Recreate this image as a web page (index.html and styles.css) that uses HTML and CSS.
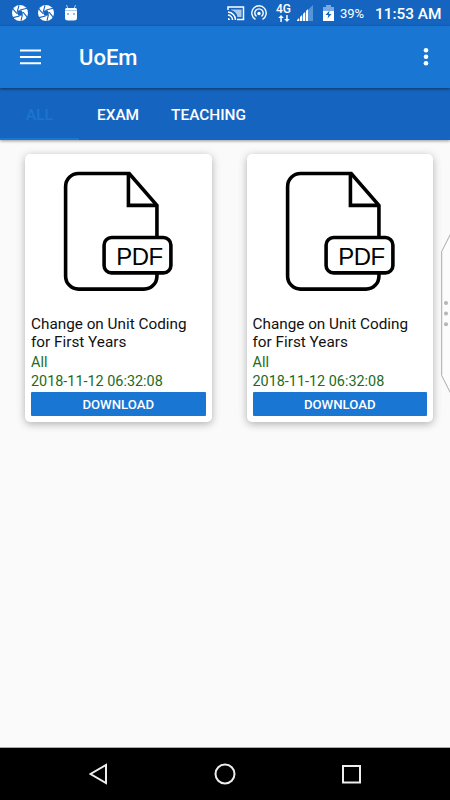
FILE: index.html
```html
<!DOCTYPE html>
<html lang="en">
<head>
<meta charset="utf-8">
<title>UoEm</title>
<link rel="stylesheet" href="styles.css">
</head>
<body>
<svg class="defs" width="0" height="0">
  <symbol id="shutter" viewBox="0 0 16 16">
    <circle cx="8" cy="8" r="8" fill="#fff"/>
    <path d="M5.2 7 7 .3M8.2 5 15 3.2M11 7.2l4.2 5M10.5 9.3 9 15.7M7.6 11 1 12.6M5 8.6.8 3.8" stroke="#1565c0" stroke-width="1.1" fill="none"/>
    <path d="m6.6 5.3 2.8 0L11 8l-1.5 2.7H6.6L5 8z" fill="#1565c0"/>
  </symbol>
  <symbol id="document" viewBox="0 0 175 155">
    <g fill="none" stroke="#000" stroke-width="3.6">
      <path d="M126.300 78V45.300L98.500 13.300H47.700a13 13 0 0 0-13 13v90a13 13 0 0 0 13 13h65.600a13 13 0 0 0 13-13V113"/>
      <path d="M97.700 13v32.300h28.600"/>
      <rect x="73.300" y="77.500" width="67" height="35.500" rx="7.500"/>
    </g>
  </symbol>
</svg>
<header class="status">
  <svg class="shutter" width="16" height="16"><use href="#shutter"/></svg>
  <svg class="shutter" width="16" height="16"><use href="#shutter"/></svg>
  <svg width="14" height="17" viewBox="0 0 14 17"><path d="m2.500 0 1.500 4M11.500 0 10 4" stroke="#a8cdf3"/><path d="M2.500 3h9q1.500 0 1.500 2v8q0 2.500-3 2.500H4Q1 15.500 1 13V5q0-2 1.500-2z" fill="#fff"/><path d="M1 5.500h12" stroke="#a8cdf3"/><circle cx="4" cy="9" r=".8" fill="#1565c0"/><circle cx="10" cy="9" r=".8" fill="#1565c0"/></svg>
  <span class="spacer"></span>
  <svg class="cast" width="18" height="15" viewBox="0 0 18 15" fill="none" stroke="#fff"><path d="M1 4V1h15.500v12.500H10" stroke-width="1.500"/><path d="M4 4V3.500h10.500V11H10.500C10 7.500 7.500 5 4 4z" fill="#fff" stroke="none" opacity=".65"/><path d="M1 6a8 8 0 0 1 7.500 8M1 9a5 5 0 0 1 4.500 5" stroke-width="1.500"/><path d="M1 12v2h2a2 2 0 0 0-2-2z" fill="#fff" stroke="none"/></svg>
  <svg class="hotspot" width="16" height="16" viewBox="0 0 16 16" fill="none" stroke="#fff" stroke-width="1.400"><path d="M4.500 14.300a7.200 7.200 0 1 1 7 0M5.500 11.400a4.200 4.200 0 1 1 5 0"/><circle cx="8" cy="8.500" r="1.700" fill="#fff" stroke="none"/></svg>
  <div class="network"><span>4G</span><svg width="12" height="7" viewBox="0 0 12 7"><path d="M3 0 .3 3h2v4h1.500V3h2zM9 7l2.700-3h-2V0H8.200v4h-2z" fill="#fff"/></svg></div>
  <svg class="signal" width="16" height="16" viewBox="0 0 16 16"><path d="M0 16 16 0v16z" fill="#5795d9"/><path d="M0 16v-1l2-2v3zM3 16v-4l2-2v6zM6 16V9l2-2v9zM9 16V6l2-2v12z" fill="#fff"/></svg>
  <svg class="battery" width="11" height="16" viewBox="0 0 11 16"><path d="M3 0h5v2h3v4H0V2h3z" fill="#79aae1"/><path d="M0 6h11v10H0z" fill="#fff"/><path d="M6.500 5.500 2.500 10h2.800l-.7 3.500L8.500 9H6z" fill="#1565c0"/></svg>
  <span class="percent">39%</span>
  <span class="clock">11:53 AM</span>
</header>
<div class="appbar">
  <svg width="21" height="16" viewBox="0 0 21 16"><path d="M0 1.500h21M0 8h21M0 14.200h21" stroke="#fff" stroke-width="2"/></svg>
  <h1>UoEm</h1>
  <svg class="more" width="6" height="20" viewBox="0 0 6 20" fill="#fff"><circle cx="3" cy="3.200" r="2.300"/><circle cx="3" cy="9.700" r="2.300"/><circle cx="3" cy="16.200" r="2.300"/></svg>
</div>
<nav class="tabs">
  <span class="tab active">ALL</span>
  <span class="tab exam">EXAM</span>
  <span class="tab">TEACHING</span>
</nav>
<main>
  <article class="card">
    <svg class="art" viewBox="0 0 175 155"><use href="#document"/><text x="85.500" y="104.700" textLength="47" class="pdf-label">PDF</text></svg>
    <h2>Change on Unit Coding<br>for First Years</h2>
    <p>All</p>
    <p>2018-11-12 06:32:08</p>
    <button>DOWNLOAD</button>
  </article>
  <article class="card">
    <svg class="art" viewBox="0 0 175 155"><use href="#document"/><text x="85.500" y="104.700" textLength="47" class="pdf-label">PDF</text></svg>
    <h2>Change on Unit Coding<br>for First Years</h2>
    <p>All</p>
    <p>2018-11-12 06:32:08</p>
    <button>DOWNLOAD</button>
  </article>
  <svg class="edge" width="9" height="160" viewBox="0 0 9 160"><path d="M9.500 0 .7 17.500v124L9.500 159" fill="#fcfcfc" stroke="#aaa"/><g fill="#b5b5b5"><circle cx="5" cy="69" r="2"/><circle cx="5" cy="79.500" r="2"/><circle cx="5" cy="90.200" r="2"/></g></svg>
</main>
<footer class="navbar">
  <svg width="20" height="22" viewBox="0 0 20 22"><path d="M17 2v18L1.500 11z"/></svg>
  <svg width="22" height="22" viewBox="0 0 22 22"><circle cx="11" cy="11" r="9.500"/></svg>
  <svg width="20" height="20" viewBox="0 0 20 20"><rect x="2" y="2" width="17" height="16.500"/></svg>
</footer>
</body>
</html>
```

FILE: styles.css
```css
* { box-sizing: border-box; }
body {
  margin: 0;
  width: 450px;
  height: 800px;
  overflow: hidden;
  display: flex;
  flex-direction: column;
  background: #fafafa;
  font-family: Roboto, sans-serif;
}
svg { display: block; flex: none; }
.defs { position: absolute; }
.status {
  height: 26px;
  flex: none;
  display: flex;
  align-items: center;
  padding: 0 9px 0 12px;
  background: #1565c0;
  color: #fff;
}
.shutter { margin-right: 10px; }
.spacer { flex: 1; }
.cast { margin-right: 6px; }
.hotspot { margin-right: 9px; }
.network {
  width: 15px;
  margin-right: 6px;
  display: flex;
  flex-direction: column;
  align-items: center;
  font-size: 12px;
  font-weight: 500;
  line-height: 11px;
}
.signal { margin-right: 10px; }
.battery { margin-right: 6px; }
.percent { width: 35px; font-size: 13px; line-height: 26px; padding-top: 1px; }
.clock { width: 66px; font-size: 15.4px; font-weight: 500; line-height: 26px; padding-top: 1px; white-space: nowrap; }
.appbar {
  height: 62px;
  flex: none;
  display: flex;
  align-items: center;
  padding: 0 21px 1px 20px;
  background: #1976d2;
  color: #fff;
  box-shadow: 0 1px 3px rgba(0, 0, 0, .5);
  z-index: 1;
}
.appbar h1 {
  flex: 1;
  margin: 2px 0 0 38px;
  font-size: 22px;
  font-weight: 500;
  line-height: 26px;
}
.tabs {
  height: 52px;
  flex: none;
  display: flex;
  background: #1565c0;
  color: #fff;
  font-size: 15.4px;
  font-weight: 500;
  line-height: 54px;
  box-shadow: 0 1px 3px rgba(0, 0, 0, .4);
}
.tab.active {
  width: 79px;
  text-align: center;
  color: #1976d2;
  border-bottom: 2px solid #1976d2;
}
.tab.exam { margin: 0 32px 0 18px; }
main {
  flex: 1;
  position: relative;
  display: flex;
  align-items: flex-start;
  gap: 35px;
  padding: 14px 0 0 25px;
}
.card {
  width: 186.5px;
  height: 268px;
  padding: 6px;
  background: #fff;
  border-radius: 5px;
  box-shadow: 0 2px 8px rgba(0, 0, 0, .3);
}
.art { width: 174.5px; height: 155px; }
.pdf-label { font: 24px "Liberation Sans", sans-serif; }
.card h2 {
  margin: 0;
  font-size: 15.3px;
  font-weight: 400;
  line-height: 18px;
  color: #111;
  white-space: nowrap;
}
.card p {
  margin: 0;
  font-size: 14.4px;
  line-height: 19px;
  color: #1b6b20;
}
.card p:first-of-type { margin-top: 2px; }
.card button {
  display: block;
  width: 174.5px;
  height: 24px;
  margin-top: 1px;
  padding: 1px 0 0;
  border: 0;
  border-radius: 1px;
  background: #1976d2;
  color: #fff;
  font: 500 13.2px Roboto, sans-serif;
}
.edge { position: absolute; right: 0; top: 94px; }
.navbar {
  height: 53px;
  flex: none;
  display: flex;
  align-items: center;
  justify-content: space-between;
  padding: 0 89px;
  background: #000;
  border-top: 1px solid #aaa;
  fill: none;
  stroke: #eee;
  stroke-width: 2;
}
```
